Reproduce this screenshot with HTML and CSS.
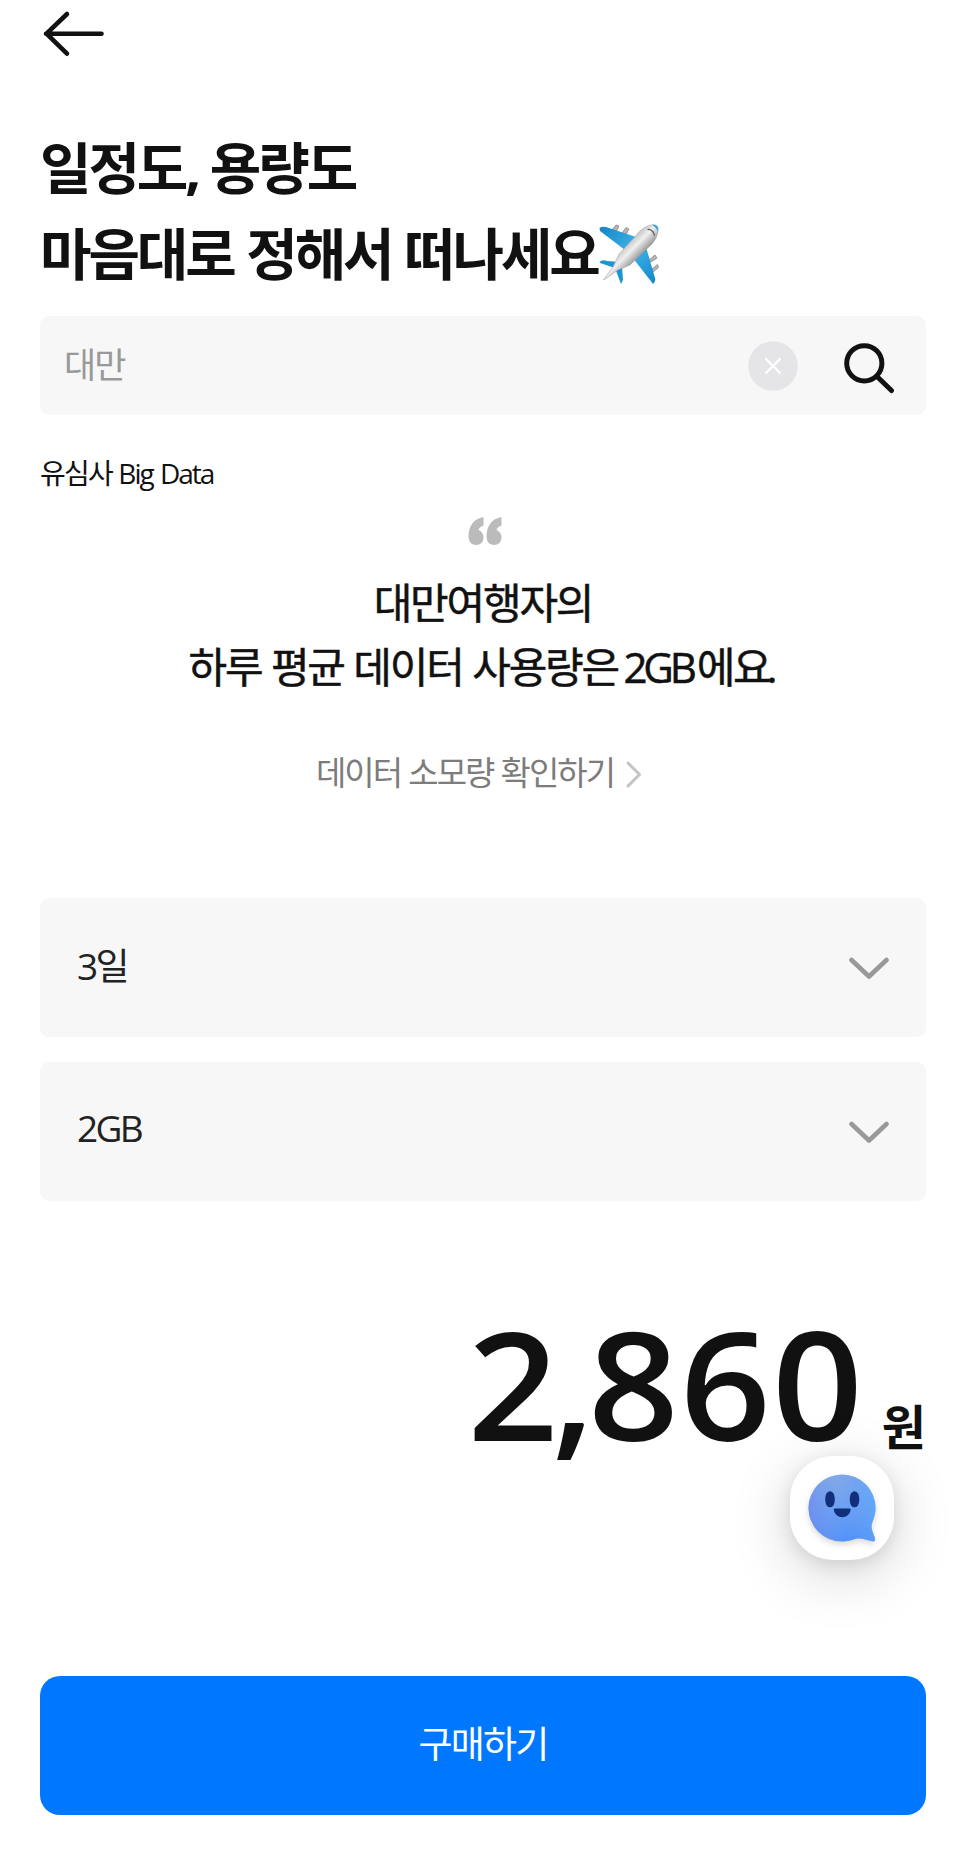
FILE: index.html
```html
<!DOCTYPE html>
<html lang="ko">
<head>
  <meta charset="utf-8">
  <title>유심사</title>
  <link rel="stylesheet" href="styles.css">
</head>
<body>
  <header class="top-bar">
    <button class="back-btn" aria-label="뒤로">
      <svg width="64" height="50" viewBox="0 0 64 50" fill="none" stroke="#111" stroke-width="4.6" stroke-linecap="round" stroke-linejoin="round">
        <path d="M61.5 24.7H6M27 5L6.5 24.7L27 44.7"/>
      </svg>
    </button>
  </header>

  <main>
    <h1 class="title">
      일정도<span class="comma">,</span> 용량도<br>마음대로 정해서 떠나세요<svg class="plane" viewBox="0 0 60 60">
        <defs>
          <linearGradient id="wing" x1="0" y1="0" x2="1" y2="1">
            <stop offset="0" stop-color="#1484c4"/>
            <stop offset=".5" stop-color="#3db3ea"/>
            <stop offset="1" stop-color="#1487c8"/>
          </linearGradient>
          <linearGradient id="hull" x1=".35" y1=".35" x2=".65" y2=".65">
            <stop offset="0" stop-color="#b5b5b5"/>
            <stop offset=".45" stop-color="#f0f0f0"/>
            <stop offset="1" stop-color="#858585"/>
          </linearGradient>
        </defs>
        <g fill="#b5b5b5" stroke="#888" stroke-width=".8">
          <path d="M13 6L17 1L20 2L17 8ZM23 9L27 3.500L30 5L27 10.500Z"/>
          <path d="M50 36L56 31L58 34L52 38ZM53 45L58.500 40.500L59.500 43.500L54 48Z"/>
        </g>
        <path fill="url(#wing)" d="M.5 4Q3 2 7 3L37 13L47 23L56 54Q57 57 54 60L51 56L33 33L26 26L1 7Z"/>
        <path fill="#1b96d5" d="M.5 38Q3 35 8 37L20 38L23 42L24 56L22 60L16 44L1 39Z"/>
        <path fill="url(#hull)" stroke="#999" stroke-width=".5" d="M4.500 55.500L14 43L20 30L41 7Q49 0 56 .8Q60 2 59 8Q58 14 53 20L31 41L19 46L5 56Z"/>
        <path fill="#2aa5e0" d="M53 .8Q60 0 59 7Q57 3 53 .8Z"/>
        <path fill="none" stroke="#555" stroke-width="1.200" d="M48.500 5.500Q54 5 55.500 11.500"/>
      </svg>
    </h1>

    <div class="search">
      <span class="search-text">대만</span>
      <button class="clear-btn" aria-label="지우기">
        <svg width="50" height="50" viewBox="0 0 50 50">
          <circle cx="25" cy="25" r="24.800" fill="#e5e5e7"/>
          <path d="M17.500 17.500L32.500 32.500M32.500 17.500L17.500 32.500" stroke="#fff" stroke-width="2.400"/>
        </svg>
      </button>
      <button class="search-btn" aria-label="검색">
        <svg width="52" height="52" viewBox="0 0 52 52" fill="none" stroke="#111" stroke-width="5" stroke-linecap="round">
          <circle cx="21.300" cy="21.300" r="17.600"/>
          <path d="M34.500 35L48.500 48.500"/>
        </svg>
      </button>
    </div>

    <section class="big-data">
      <p class="label">유심사 <span class="latin">Big Data</span></p>
      <svg class="quote" width="34" height="28" viewBox="0 0 34 28" fill="#bbb">
        <path id="mark" d="M15.500 0V8.500Q11.500 9.500 10.500 13Q15.500 15 15.500 20.500Q15 28 8 28Q.5 27.500 .5 19Q1 3 15.500 0Z"/>
        <use href="#mark" x="18"/>
      </svg>
      <p class="average">대만여행자의<br>하루 평균 데이터 사용량은 <b>2GB</b>에요<span class="dot">.</span></p>
      <a class="usage-link">
        <span>데이터 소모량 확인하기</span>
        <svg width="16" height="30" viewBox="0 0 16 30" fill="none" stroke="#c4c4c4" stroke-width="3" stroke-linecap="round" stroke-linejoin="round">
          <path d="M2 4L13.500 15.500L2 27"/>
        </svg>
      </a>
    </section>

    <div class="options">
      <button class="select">
        <span>3일</span>
        <svg width="40" height="24" viewBox="0 0 40 24" fill="none" stroke="#999" stroke-width="4.600" stroke-linecap="round" stroke-linejoin="round">
          <path d="M2.500 3L20 19.500L37.500 3"/>
        </svg>
      </button>
      <button class="select">
        <span>2GB</span>
        <svg width="40" height="24" viewBox="0 0 40 24" fill="none" stroke="#999" stroke-width="4.600" stroke-linecap="round" stroke-linejoin="round">
          <path d="M2.500 3L20 19.500L37.500 3"/>
        </svg>
      </button>
    </div>

    <div class="price">
      <strong class="amount"><span class="thousands">2,</span>860</strong>
      <span class="won">원</span>
    </div>

    <button class="buy-btn">구매하기</button>
  </main>

  <button class="chat-btn" aria-label="상담">
    <svg width="76" height="76" viewBox="0 0 76 76">
      <defs>
        <linearGradient id="bubble" x1=".35" y1="0" x2=".6" y2="1">
          <stop offset="0" stop-color="#85a9e6"/>
          <stop offset=".55" stop-color="#6aa0f4"/>
          <stop offset="1" stop-color="#5092f8"/>
        </linearGradient>
        <linearGradient id="side" x1="0" y1=".6" x2="1" y2=".4">
          <stop offset="0" stop-color="#6f86ee" stop-opacity=".7"/>
          <stop offset=".5" stop-color="#6f9cee" stop-opacity="0"/>
          <stop offset="1" stop-color="#5eaafc" stop-opacity=".8"/>
        </linearGradient>
        <path id="body" d="M38 4.500A33.500 33.500 0 0 1 71.500 38C71.500 47 67.500 52 67.500 56.500C67.500 61 71 66 71 69.500C71 71 69.800 71.700 68 71.300C64 70.500 59 68 54 68.500C49 69 46 71.500 38 71.500A33.500 33.500 0 0 1 38 4.500Z"/>
      </defs>
      <use href="#body" fill="url(#bubble)"/>
      <use href="#body" fill="url(#side)"/>
      <g fill="#112f7b">
        <rect x="21.300" y="21.300" width="9.400" height="16" rx="4.700" ry="6.500"/>
        <rect x="45.800" y="21.300" width="9.400" height="16" rx="4.700" ry="6.500"/>
        <path d="M31 38.500H45.500Q47 38.500 46.700 40Q45 47.300 38.200 47.300Q31.500 47.300 29.700 40Q29.500 38.500 31 38.500Z"/>
      </g>
    </svg>
  </button>
</body>
</html>
```

FILE: styles.css
```css
* {
  box-sizing: border-box;
}

body {
  position: relative;
  height: 1863px;
  margin: 0;
  padding: 0 40px;
  background: #fff;
  color: #111;
  font-family: "Noto Sans CJK KR", sans-serif;
}

button {
  display: flex;
  align-items: center;
  padding: 0;
  border: none;
  background: none;
  color: inherit;
  font: inherit;
}

p {
  margin: 0;
}

svg {
  flex: none;
}

.top-bar {
  height: 123px;
  padding-top: 9px;
}

/* Title */
.title {
  height: 193px;
  margin: 0;
  font-size: 56px;
  font-weight: 700;
  line-height: 84px;
  letter-spacing: -3.1px;
  white-space: nowrap;
}

.comma {
  font-family: "Noto Sans", sans-serif;
  letter-spacing: -4px;
}

.plane {
  width: 60px;
  height: 60px;
  margin-left: 1px;
  vertical-align: -9px;
}

/* Search box */
.search {
  display: flex;
  align-items: center;
  height: 99px;
  padding: 0 31px 0 24px;
  border-radius: 9px;
  background: #f7f7f7;
}

.search-text {
  flex: 1;
  padding-bottom: 6px;
  color: #999;
  font-size: 35px;
  letter-spacing: -2px;
}

.clear-btn {
  margin-right: 45px;
}

.search-btn {
  padding-top: 4px;
}

/* Average usage */
.big-data {
  display: flex;
  flex-direction: column;
  align-items: center;
  height: 483px;
  padding-top: 37px;
}

.label {
  align-self: flex-start;
  font-size: 28px;
  line-height: 40px;
  letter-spacing: -1.7px;
}

.latin {
  font-family: "Open Sans", sans-serif;
  letter-spacing: -2px;
  word-spacing: 2px;
}

.quote {
  margin: 24px 0 24px 4px;
}

.average {
  font-size: 42px;
  line-height: 64px;
  letter-spacing: -2.2px;
  text-align: center;
  -webkit-text-stroke: 0.5px #111;
}

.average b {
  margin: 0 4px 0 -4px;
  font-family: "Open Sans", sans-serif;
  font-weight: 400;
  letter-spacing: -4.2px;
}

.dot {
  margin: 0 3px 0 -3px;
  font-family: "Open Sans", sans-serif;
  letter-spacing: -3px;
}

.usage-link {
  display: flex;
  align-items: center;
  gap: 12px;
  margin: 48px 8px 0 0;
  color: #7c7c7c;
  font-size: 33px;
  line-height: 48px;
  letter-spacing: -2px;
}

.usage-link svg {
  margin-top: 5px;
}

/* Day and data selects */
.options {
  display: flex;
  flex-direction: column;
  gap: 25px;
}

.select {
  justify-content: space-between;
  height: 139px;
  padding: 0 37px;
  border-radius: 9px;
  background: #f7f7f7;
  color: #222;
  font-family: "Open Sans", "Noto Sans CJK KR", sans-serif;
  font-size: 37px;
  letter-spacing: -2.6px;
}

.select span {
  padding-bottom: 8px;
}

.select svg {
  margin-top: 3px;
}

/* Price */
.price {
  display: flex;
  justify-content: flex-end;
  align-items: baseline;
  gap: 18px;
  height: 475px;
  padding-top: 82px;
}

.amount {
  font-family: "Open Sans", sans-serif;
  font-size: 150px;
  font-weight: 600;
  line-height: 200px;
  letter-spacing: 1px;
  transform: scaleX(1.06);
  transform-origin: right;
}

.thousands {
  letter-spacing: -6.5px;
}

.won {
  font-size: 48px;
  font-weight: 700;
  transform: translateY(4px);
}

.buy-btn {
  justify-content: center;
  width: 100%;
  height: 139px;
  padding-bottom: 7px;
  border-radius: 20px;
  background: #0077ff;
  color: #fff;
  font-size: 37px;
  letter-spacing: -1.8px;
}

/* Floating chat button */
.chat-btn {
  position: absolute;
  top: 1456px;
  left: 790px;
  justify-content: center;
  width: 104px;
  height: 104px;
  border-radius: 43px;
  background: #fff;
  box-shadow: 0 14px 60px rgba(0, 0, 0, 0.17), 0 4px 18px rgba(0, 0, 0, 0.1);
}

.chat-btn svg {
  filter: drop-shadow(0 3px 3px rgba(0, 0, 0, 0.15));
}
```
